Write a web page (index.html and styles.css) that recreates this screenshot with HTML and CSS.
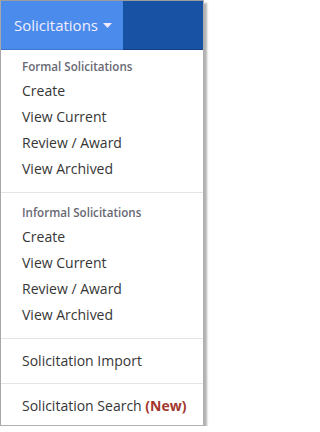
FILE: index.html
```html
<!DOCTYPE html>
<html>
<head>
<meta charset="utf-8">
<link rel="stylesheet" href="styles.css">
</head>
<body>
<div class="menu">
  <div class="bar">
    <div class="tab">Solicitations<svg class="caret" width="9" height="5" viewBox="0 0 9 5"><path d="M0 0 H9 L4.5 5 Z" fill="#f1eaff"/></svg></div>
    <div class="tab-rest"></div>
  </div>
  <div class="dropdown">
    <div class="section first">
      <div class="header">Formal Solicitations</div>
      <div class="item">Create</div>
      <div class="item">View Current</div>
      <div class="item">Review / Award</div>
      <div class="item">View Archived</div>
    </div>
    <div class="section">
      <div class="header">Informal Solicitations</div>
      <div class="item">Create</div>
      <div class="item">View Current</div>
      <div class="item">Review / Award</div>
      <div class="item">View Archived</div>
    </div>
    <div class="section single">
      <div class="item">Solicitation Import</div>
    </div>
    <div class="section single last">
      <div class="item">Solicitation Search <span class="new">(New)</span></div>
    </div>
  </div>
</div>
</body>
</html>
```

FILE: styles.css
```css
html, body {
  margin: 0;
  padding: 0;
  background: #ffffff;
}
body {
  font-family: "Open Sans", "Liberation Sans", sans-serif;
}
.menu {
  width: 202px;
  border-top: 1px solid #9c9c9c;
  border-left: 1px solid #a8a8a8;
  border-right: 1px solid #b0b0b0;
  border-bottom: 1px solid #b0b0b0;
  box-shadow: 3px 3px 2px rgba(0, 0, 0, 0.3);
  background: #ffffff;
}
.bar {
  display: flex;
  height: 49px;
}
.tab {
  width: 122px;
  background: #4a8bec;
  color: #f3eeff;
  font-size: 15px;
  display: flex;
  align-items: center;
  padding-left: 13px;
  box-sizing: border-box;
  gap: 5px;
  border-bottom: 1px solid #3f78cf;
}
.caret {
  display: block;
  margin-top: 1px;
}
.tab-rest {
  flex: 1;
  background: #1852a5;
  border-bottom: 1px solid #153f80;
}
.dropdown {
  display: flex;
  flex-direction: column;
}
.section {
  padding: 9px 0 10px;
  border-top: 1px solid #e4e4e4;
}
.section.first {
  border-top: none;
  padding-top: 6px;
}
.section.single {
  padding: 9px 0 9px;
}
.section.last {
  padding-bottom: 6px;
}
.header {
  font-size: 11.6px;
  font-weight: 600;
  color: #686874;
  line-height: 22px;
  padding-left: 21px;
}
.item {
  font-size: 14px;
  color: #363636;
  line-height: 26px;
  padding-left: 21px;
  white-space: nowrap;
}
.new {
  color: #a3372f;
  font-weight: 700;
}
```
